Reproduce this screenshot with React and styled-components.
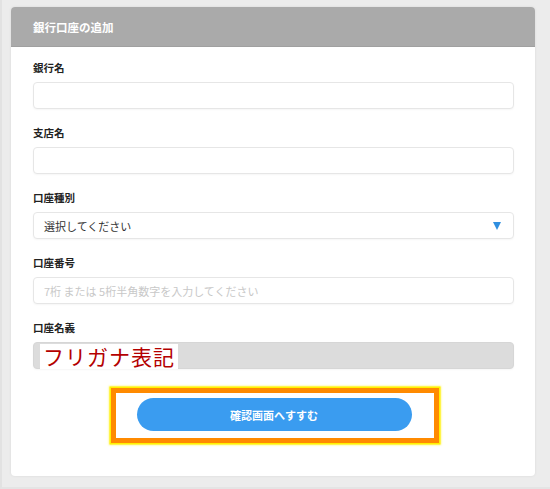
import styled, { createGlobalStyle } from "styled-components";

const GlobalStyle = createGlobalStyle`
  html, body {
    margin: 0;
    padding: 0;
    background: #ececec;
  }
  body {
    font-family: "Noto Sans CJK JP", "Noto Sans", sans-serif;
    color: #333;
  }
`;

const Frame = styled.div`
  width: 550px;
  height: 489px;
  box-sizing: border-box;
  padding: 7px 15px 11px 11px;
  background: #ececec;
  border-left: 2px solid #e2e2e2;
  border-bottom: 2px solid #e4e4e4;
`;

const Card = styled.div`
  height: 100%;
  margin-left: -2px;
  background: #fff;
  border-radius: 4px;
  box-shadow: 0 0 3px rgba(0, 0, 0, 0.08);
  overflow: hidden;
`;

const Header = styled.div`
  height: 40px;
  background: #aaaaaa;
  border-bottom: 1px solid #a0a0a0;
  box-sizing: border-box;
  display: flex;
  align-items: center;
  padding-left: 22px;
  color: #fff;
  font-size: 11.5px;
  font-weight: 700;
`;

const Body = styled.div`
  padding: 13px 21px 0 22px;
  display: flex;
  flex-direction: column;
  gap: 16px;
`;

const Field = styled.div`
  display: flex;
  flex-direction: column;
  gap: 6px;
`;

const Label = styled.div`
  font-size: 10.5px;
  font-weight: 700;
  line-height: 16px;
  color: #222;
`;

const Input = styled.div`
  position: relative;
  height: 27px;
  box-sizing: border-box;
  border: 1px solid ${(p) => (p.$disabled ? "#d6d6d6" : "#e6e6e6")};
  border-radius: 4px;
  background: ${(p) => (p.$disabled ? "#dcdcdc" : "#fff")};
  box-shadow: 0 1px 2px rgba(0, 0, 0, 0.04);
  display: flex;
  align-items: center;
  padding: 0 10px;
  font-size: 11px;
  color: ${(p) => (p.$placeholder ? "#c8c8c8" : "#333")};
`;

const Arrow = styled.span`
  margin-left: auto;
  width: 0;
  height: 0;
  border-left: 4px solid transparent;
  border-right: 4px solid transparent;
  border-top: 8px solid #2f8fe0;
  margin-right: 2px;
`;

const Kana = styled.span`
  position: absolute;
  left: 6px;
  top: 1px;
  height: 25px;
  padding: 0 3px;
  background: #fff;
  color: #b40000;
  font-size: 21px;
  line-height: 25px;
  letter-spacing: 1px;
`;

const ButtonArea = styled.div`
  display: flex;
  justify-content: center;
  margin-top: 3px;
`;

const Highlight = styled.div`
  width: 328px;
  height: 55px;
  box-sizing: border-box;
  border: 5px solid #ff8a00;
  box-shadow: 0 0 0 1.5px #fff200, 0 0 2px 2px rgba(255, 240, 0, 0.6);
  background: #fff;
  padding: 5px 22px 0 21px;
  margin-left: 2px;
`;

const Button = styled.button`
  width: 100%;
  height: 33px;
  border: none;
  border-radius: 17px;
  background: #3a9cf0;
  color: #fff;
  font-family: inherit;
  font-size: 11px;
  font-weight: 700;
  cursor: pointer;
`;

export default function App() {
  return (
    <>
      <GlobalStyle />
      <Frame>
        <Card>
          <Header>銀行口座の追加</Header>
          <Body>
            <Field>
              <Label>銀行名</Label>
              <Input />
            </Field>
            <Field>
              <Label>支店名</Label>
              <Input />
            </Field>
            <Field>
              <Label>口座種別</Label>
              <Input>
                選択してください
                <Arrow />
              </Input>
            </Field>
            <Field>
              <Label>口座番号</Label>
              <Input $placeholder>7桁 または 5桁半角数字を入力してください</Input>
            </Field>
            <Field>
              <Label>口座名義</Label>
              <Input $disabled>
                <Kana>フリガナ表記</Kana>
              </Input>
            </Field>
            <ButtonArea>
              <Highlight>
                <Button>確認画面へすすむ</Button>
              </Highlight>
            </ButtonArea>
          </Body>
        </Card>
      </Frame>
    </>
  );
}
